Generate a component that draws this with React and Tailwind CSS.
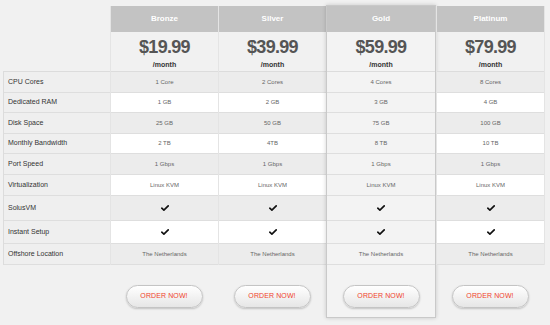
const plans = [
  { name: "Bronze", price: "$19.99", values: ["1 Core", "1 GB", "25 GB", "2 TB", "1 Gbps", "Linux KVM", true, true, "The Netherlands"] },
  { name: "Silver", price: "$39.99", values: ["2 Cores", "2 GB", "50 GB", "4TB", "1 Gbps", "Linux KVM", true, true, "The Netherlands"] },
  { name: "Gold", price: "$59.99", featured: true, values: ["4 Cores", "3 GB", "75 GB", "8 TB", "1 Gbps", "Linux KVM", true, true, "The Netherlands"] },
  { name: "Platinum", price: "$79.99", values: ["8 Cores", "4 GB", "100 GB", "10 TB", "1 Gbps", "Linux KVM", true, true, "The Netherlands"] },
];

const labels = [
  "CPU Cores",
  "Dedicated RAM",
  "Disk Space",
  "Monthly Bandwidth",
  "Port Speed",
  "Virtualization",
  "SolusVM",
  "Instant Setup",
  "Offshore Location",
];

// row heights incl. bottom border
const rowH = ["h-[21px]", "h-[20px]", "h-[21px]", "h-[20px]", "h-[21px]", "h-[21px]", "h-[25px]", "h-[23px]", "h-[21px]"];

function Check() {
  return (
    <svg width="8" height="6" viewBox="0 0 8 6">
      <path d="M0.8 3.2 L2.9 5.1 L7.2 0.9" fill="none" stroke="#111" strokeWidth="1.7" strokeLinecap="round" strokeLinejoin="round" />
    </svg>
  );
}

function PlanColumn({ plan }) {
  const featured = plan.featured;
  return (
    <div
      className={
        featured
          ? "w-[110px] h-[313px] border border-[#c9c9c9] bg-[#f3f3f3] shadow-[0_0_4px_rgba(0,0,0,0.18)] flex flex-col"
          : "w-[108px] pt-px flex flex-col"
      }
    >
      <div className={featured ? "" : "border-l border-[#e4e4e4]"}>
        <div className="h-[26px] bg-[#c3c3c3] flex items-center justify-center text-white font-bold text-[8px]">
          {plan.name}
        </div>
        <div className="h-[40px] border-b border-[#dcdcdc] flex flex-col items-center pt-[5px]">
          <div className="text-[18px] font-bold text-[#555] tracking-[-0.7px] leading-[20px]">{plan.price}</div>
          <div className="text-[7px] font-bold text-[#333] mt-[4px] leading-[8px]">/month</div>
        </div>
        {plan.values.map((v, i) => (
          <div
            key={i}
            className={`${rowH[i]} border-b border-[#dedede] flex items-center justify-center text-[6px] text-[#666] ${
              featured ? "" : i % 2 === 0 ? "bg-[#ececec]" : "bg-white"
            }`}
          >
            {v === true ? <Check /> : v}
          </div>
        ))}
      </div>
      <div className="flex justify-center pt-[20px]">
        <button className="w-[77px] h-[23px] rounded-full border border-[#c4c4c4] bg-gradient-to-b from-white to-[#e6e6e6] shadow-[0_1px_2px_rgba(0,0,0,0.2)] text-[7px] text-[#f0432c] tracking-[0.1px]">
          ORDER NOW!
        </button>
      </div>
    </div>
  );
}

export default function App() {
  return (
    <div className="w-[550px] h-[325px] bg-[#f1f1f1] font-['Liberation_Sans',Arial,sans-serif] pl-[3px] pt-[5px] flex items-start overflow-hidden">
      <div className="w-[107px] flex flex-col">
        <div className="h-[66px]" />
        <div className="border-t border-l border-[#dcdcdc] bg-[#efefef]">
          {labels.map((l, i) => (
            <div key={l} className={`${rowH[i]} border-b border-[#dedede] flex items-center pl-[4px] text-[7px] text-[#333]`}>
              {l}
            </div>
          ))}
        </div>
      </div>
      {plans.map((p) => (
        <PlanColumn key={p.name} plan={p} />
      ))}
      <div className="w-px h-[259px] mt-[1px] bg-[#e4e4e4]" />
    </div>
  );
}
